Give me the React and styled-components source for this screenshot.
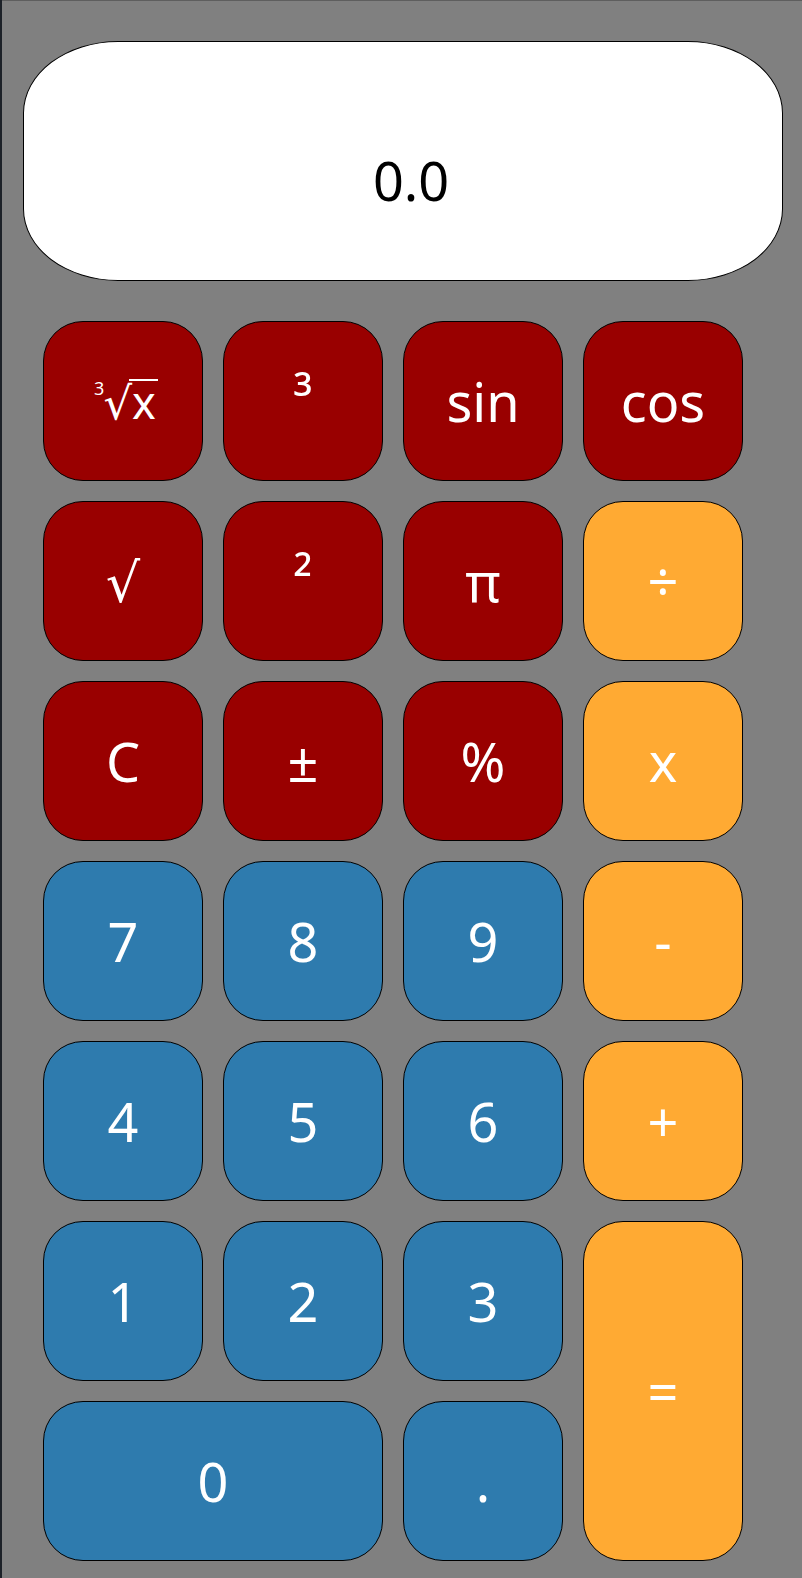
import React from "react";
import styled, { createGlobalStyle } from "styled-components";

const GlobalStyle = createGlobalStyle`
  html, body {
    margin: 0;
    padding: 0;
    background: #1c2128;
  }
  body {
    font-family: "Noto Sans", "DejaVu Sans", sans-serif;
  }
`;

const Page = styled.div`
  margin-left: 2px;
  min-height: 1578px;
  box-sizing: border-box;
  background: #808080;
  border-top: 1px solid #5e5e5e;
  padding: 40px 0 0 21px;
`;

const Display = styled.div`
  box-sizing: border-box;
  width: 760px;
  height: 240px;
  background: #ffffff;
  border: 1px solid #000000;
  border-radius: 95px / 72px;
  display: flex;
  align-items: center;
  justify-content: center;
  padding: 37px 0 0 16px;
  font-size: 54px;
  color: #000000;
`;

const Keypad = styled.div`
  display: grid;
  grid-template-columns: repeat(4, 160px);
  grid-auto-rows: 160px;
  gap: 20px;
  margin: 40px 0 0 20px;
`;

const COLORS = {
  fn: "#990000",
  num: "#2e7bae",
  op: "#ffaa33",
};

const Key = styled.button`
  box-sizing: border-box;
  margin: 0;
  padding: 0;
  border: 1px solid #000000;
  border-radius: 40px;
  background: ${(p) => COLORS[p.$kind]};
  color: #ffffff;
  font-family: "Noto Sans", "DejaVu Sans", sans-serif;
  font-size: 54px;
  line-height: 1;
  display: flex;
  align-items: center;
  justify-content: center;
  grid-column: span ${(p) => p.$cols || 1};
  grid-row: span ${(p) => p.$rows || 1};
  cursor: pointer;
`;

const Sup = styled.span`
  display: inline-block;
  transform: translateY(-4px);
`;

const Root = styled.span`
  display: inline-flex;
  align-items: baseline;
  font-size: 45px;
  line-height: 1;
  margin-left: 6px;
`;

const RootIndex = styled.span`
  font-size: 18px;
  position: relative;
  top: -24px;
  margin-right: -1px;
`;

const Radical = styled.span``;

const Radicand = styled.span`
  display: inline-block;
  line-height: 0.92;
  border-top: 2px solid #ffffff;
  margin-left: -3px;
  padding: 0 2px 0 3px;
`;

const CubeRoot = () => (
  <Root>
    <RootIndex>3</RootIndex>
    <Radical>√</Radical>
    <Radicand>x</Radicand>
  </Root>
);

const keys = [
  { label: <CubeRoot />, kind: "fn" },
  { label: <Sup>³</Sup>, kind: "fn" },
  { label: "sin", kind: "fn" },
  { label: "cos", kind: "fn" },
  { label: "√", kind: "fn" },
  { label: <Sup>²</Sup>, kind: "fn" },
  { label: "π", kind: "fn" },
  { label: "÷", kind: "op" },
  { label: "C", kind: "fn" },
  { label: "±", kind: "fn" },
  { label: "%", kind: "fn" },
  { label: "x", kind: "op" },
  { label: "7", kind: "num" },
  { label: "8", kind: "num" },
  { label: "9", kind: "num" },
  { label: "-", kind: "op" },
  { label: "4", kind: "num" },
  { label: "5", kind: "num" },
  { label: "6", kind: "num" },
  { label: "+", kind: "op" },
  { label: "1", kind: "num" },
  { label: "2", kind: "num" },
  { label: "3", kind: "num" },
  { label: "=", kind: "op", rows: 2 },
  { label: "0", kind: "num", cols: 2 },
  { label: ".", kind: "num" },
];

export default function App() {
  return (
    <>
      <GlobalStyle />
      <Page>
        <Display>0.0</Display>
        <Keypad>
          {keys.map((k, i) => (
            <Key key={i} $kind={k.kind} $cols={k.cols} $rows={k.rows}>
              {k.label}
            </Key>
          ))}
        </Keypad>
      </Page>
    </>
  );
}
